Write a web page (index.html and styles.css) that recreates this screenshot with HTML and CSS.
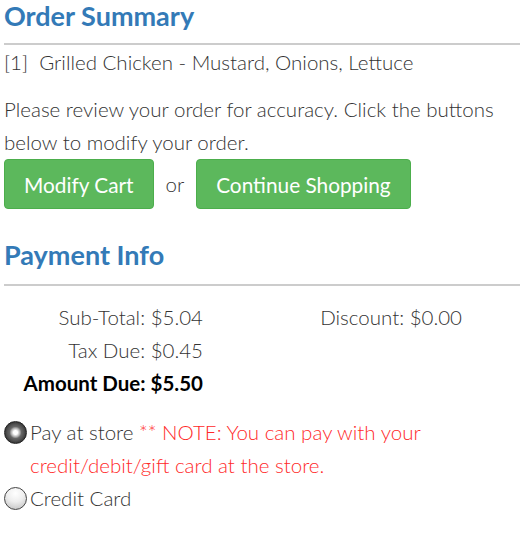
FILE: index.html
```html
<!DOCTYPE html>
<html>
<head>
<meta charset="utf-8">
<link rel="stylesheet" href="styles.css">
</head>
<body>
<div class="page">
  <h2 class="heading">Order Summary</h2>
  <hr class="rule">
  <div class="item">[1]&nbsp; Grilled Chicken - Mustard, Onions, Lettuce</div>
  <p class="note">Please review your order for accuracy. Click the buttons below to modify your order.</p>
  <div class="actions">
    <button class="btn">Modify Cart</button>
    <span class="or">or</span>
    <button class="btn">Continue Shopping</button>
  </div>
  <h2 class="heading heading-pay">Payment Info</h2>
  <hr class="rule rule-pay">
  <div class="totals">
    <div class="col-left">
      <div>Sub-Total: $5.04</div>
      <div>Tax Due: $0.45</div>
      <div class="due">Amount Due: $5.50</div>
    </div>
    <div class="col-right">
      <div>Discount: $0.00</div>
    </div>
  </div>
  <div class="pay">
    <label class="opt"><span class="radio checked"></span><span class="opt-text">Pay at store <span class="warn">** NOTE: You can pay with your credit/debit/gift card at the store.</span></span></label>
    <label class="opt"><span class="radio"></span><span class="opt-text">Credit Card</span></label>
  </div>
</div>
</body>
</html>
```
FILE: styles.css
```css
html, body {
  margin: 0;
  padding: 0;
  background: #fff;
}
body {
  font-family: Lato, "Open Sans", sans-serif;
  font-weight: 300;
  font-size: 20.5px;
  color: #333;
  line-height: 33px;
}
.page {
  padding: 0 12px 0 4px;
}
.heading {
  margin: 0;
  font-size: 27px;
  font-weight: 700;
  color: #337ab7;
  line-height: 31px;
}
.heading-pay {
  margin-top: 30px;
}
.rule {
  border: 0;
  border-top: 2px solid #ccc;
  margin: 12px 0 0 0;
}
.rule-pay {
  margin-top: 14px;
}
.item {
  margin-top: 1px;
}
.note {
  margin: 14px 0 0 0;
}
.actions {
  display: flex;
  align-items: center;
  gap: 13px;
  margin-top: 0;
}
.btn {
  font-family: Lato, "Open Sans", sans-serif;
  font-weight: 400;
  font-size: 20.8px;
  color: #fff;
  background: #5cb85c;
  border: 1px solid #4cae4c;
  border-radius: 4px;
  height: 50px;
  padding: 0 19px;
}
.or {
  font-weight: 300;
  margin: 0 -1px;
}
.totals {
  display: flex;
  margin-top: 15px;
}
.col-left {
  width: 199px;
  text-align: right;
}
.col-right {
  width: 259px;
  text-align: right;
}
.due {
  font-weight: 700;
  color: #000;
}
.pay {
  margin-top: 16px;
}
.opt {
  display: flex;
  align-items: flex-start;
}
.radio {
  flex: none;
  width: 23px;
  height: 23px;
  margin: 5px 3px 0 0;
  border-radius: 50%;
  border: 1px solid #444;
  box-sizing: border-box;
  background: radial-gradient(circle at 50% 25%, #fff 0%, #eee 45%, #bbb 100%);
}
.radio.checked {
  border: 1px solid #222;
  background: radial-gradient(circle at 50% 50%, #fff 0 2px, #ddd 3px, #aaa 4.5px, #666 6px, #555 8px, #333 11px);
}
.opt-text {
  flex: 1;
}
.warn {
  color: #ff2a2a;
}
```
